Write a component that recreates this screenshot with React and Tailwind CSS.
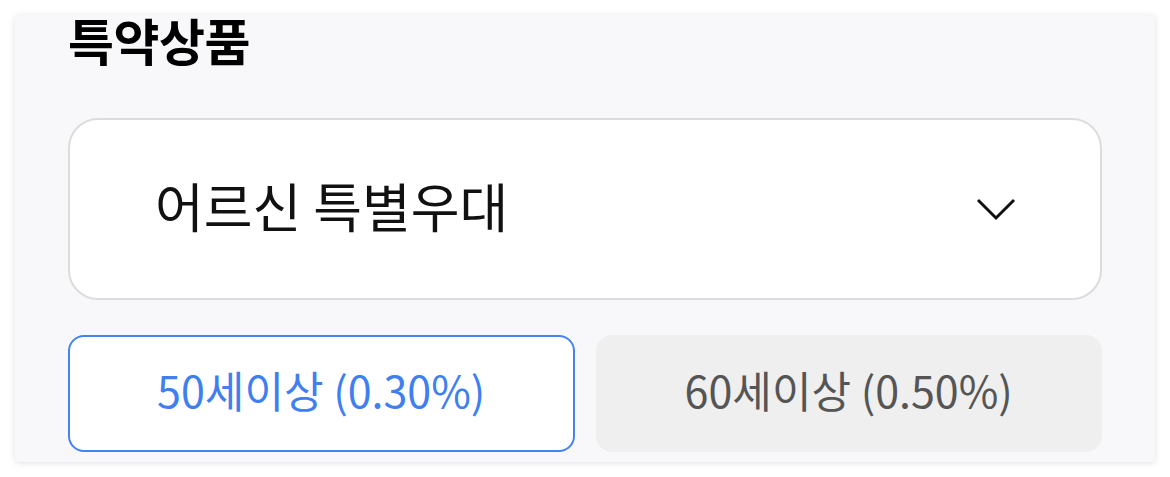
import React from 'react';

const font = { fontFamily: '"Noto Sans CJK KR", "Noto Sans", sans-serif' };

export default function App() {
  return (
    <div className="w-full h-[477px] bg-white px-[15px] pt-[15px]" style={font}>
      <div className="h-[447px] bg-[#f8f8fa] rounded-[4px] shadow-[0_1px_6px_rgba(0,0,0,0.12)] px-[53px] flex flex-col">
        <h2 className="text-[50px] leading-[50px] font-bold text-black mt-[-1px] tracking-[-0.5px]">특약상품</h2>
        <button className="mt-[54px] h-[182px] w-full bg-white border-2 border-[#dcdcdc] rounded-[30px] flex items-center justify-between pl-[85px] pr-[84px]">
          <span className="text-[53px] leading-[60px] text-[#111] mb-[8px]">어르신 특별우대</span>
          <svg width="40" height="24" viewBox="0 0 40 24" fill="none">
            <path d="M2 3 L20 21 L38 3" stroke="#111" strokeWidth="3" />
          </svg>
        </button>
        <div className="mt-[35px] grid grid-cols-2 gap-[21px]">
          <button className="h-[117px] pb-[8px] bg-white border-[2.5px] border-[#4583ee] rounded-[16px] text-[43px] text-[#3f7ff0]">
            50세이상 (0.30%)
          </button>
          <button className="h-[117px] pb-[8px] bg-[#efefef] rounded-[16px] text-[43px] text-[#555]">
            60세이상 (0.50%)
          </button>
        </div>
      </div>
    </div>
  );
}
